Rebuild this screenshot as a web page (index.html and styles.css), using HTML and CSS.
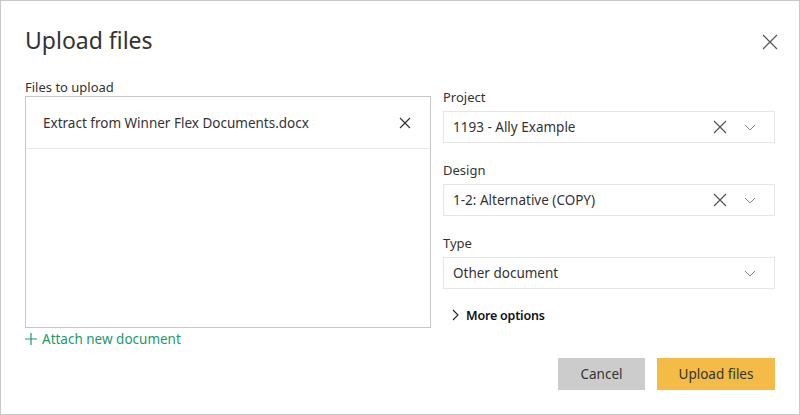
FILE: index.html
```html
<!DOCTYPE html>
<html lang="en">

<head>
  <meta charset="UTF-8">
  <title>Upload files</title>
  <link rel="stylesheet" href="styles.css">
</head>

<body>
  <div class="dialog">
    <header class="dialog-header">
      <h1>Upload files</h1>
      <button class="icon-btn close-btn" aria-label="Close">
        <svg width="16" height="16" viewBox="0 0 16 16"><path d="M1 1L15 15M15 1L1 15" stroke="#555" stroke-width="1.2" fill="none"/></svg>
      </button>
    </header>

    <div class="dialog-body">
      <div class="files-col">
        <div class="label">Files to upload</div>
        <div class="file-box">
          <div class="file-row">
            <span>Extract from Winner Flex Documents.docx</span>
            <svg width="12" height="12" viewBox="0 0 12 12"><path d="M1 1L11 11M11 1L1 11" stroke="#333" stroke-width="1.2" fill="none"/></svg>
          </div>
        </div>
        <a class="attach-link" href="#">
          <svg width="12" height="12" viewBox="0 0 12 12"><path d="M6 0V12M0 6H12" stroke="#1b9a6c" stroke-width="1.2" fill="none"/></svg>
          Attach new document
        </a>
      </div>

      <div class="fields-col">
        <div class="field">
          <div class="label">Project</div>
          <div class="select">
            <span class="value">1193 - Ally Example</span>
            <svg class="clear" width="14" height="14" viewBox="0 0 14 14"><path d="M1 1L13 13M13 1L1 13" stroke="#555" stroke-width="1.3" fill="none"/></svg>
            <svg class="chev" width="12" height="7" viewBox="0 0 12 7"><path d="M1 1L6 6L11 1" stroke="#888" stroke-width="1" fill="none"/></svg>
          </div>
        </div>
        <div class="field">
          <div class="label">Design</div>
          <div class="select">
            <span class="value">1-2: Alternative (COPY)</span>
            <svg class="clear" width="14" height="14" viewBox="0 0 14 14"><path d="M1 1L13 13M13 1L1 13" stroke="#555" stroke-width="1.3" fill="none"/></svg>
            <svg class="chev" width="12" height="7" viewBox="0 0 12 7"><path d="M1 1L6 6L11 1" stroke="#888" stroke-width="1" fill="none"/></svg>
          </div>
        </div>
        <div class="field">
          <div class="label">Type</div>
          <div class="select">
            <span class="value">Other document</span>
            <svg class="chev" width="12" height="7" viewBox="0 0 12 7"><path d="M1 1L6 6L11 1" stroke="#888" stroke-width="1" fill="none"/></svg>
          </div>
        </div>
        <div class="more-options">
          <svg width="7" height="12" viewBox="0 0 7 12"><path d="M1 1L6 6L1 11" stroke="#222" stroke-width="1.1" fill="none"/></svg>
          More options
        </div>
      </div>
    </div>

    <footer class="dialog-footer">
      <button class="btn btn-cancel">Cancel</button>
      <button class="btn btn-primary">Upload files</button>
    </footer>
  </div>
</body>

</html>
```

FILE: styles.css
```css
body {
  margin: 0;
  font-family: "Noto Sans", Arial, sans-serif;
  color: #333;
  background: #fff;
}

.dialog {
  width: 800px;
  height: 415px;
  box-sizing: border-box;
  border: 1px solid #c8c8c8;
  padding: 0 24px;
  display: flex;
  flex-direction: column;
}

.dialog-header {
  display: flex;
  align-items: center;
  justify-content: space-between;
  height: 78px;
}

.dialog-header h1 {
  margin: 0 0 0 0;
  font-size: 23px;
  font-weight: 400;
  color: #333;
}

.icon-btn {
  border: none;
  background: none;
  padding: 0;
  cursor: pointer;
  display: flex;
}

.close-btn {
  margin: 4px -3px 0 0;
}

.dialog-body {
  display: flex;
  gap: 12px;
}

.label {
  font-size: 13px;
  line-height: 17px;
  color: #333;
}

.files-col {
  width: 406px;
}

.file-box {
  height: 230px;
  border: 1px solid #c8c8c8;
}

.file-row {
  display: flex;
  align-items: center;
  justify-content: space-between;
  height: 51px;
  padding: 0 19px 0 17px;
  border-bottom: 1px solid #e8e8e8;
  font-size: 13.5px;
}

.attach-link {
  display: inline-flex;
  align-items: center;
  gap: 5px;
  margin-top: 1px;
  font-size: 13.5px;
  color: #1b9a6c;
  text-decoration: none;
}

.fields-col {
  flex: 1;
  padding-top: 10px;
}

.field {
  margin-bottom: 19px;
}

.field .label {
  margin-bottom: 5px;
}

.select {
  display: flex;
  align-items: center;
  height: 30px;
  border: 1px solid #e6e6e6;
  padding: 0 18px 0 9px;
  font-size: 13.5px;
}

.select .value {
  flex: 1;
}

.select .clear {
  margin-right: 17px;
}

.more-options {
  display: flex;
  align-items: center;
  gap: 7px;
  height: 18px;
  padding-left: 9px;
  margin-top: -2px;
  font-size: 12.5px;
  font-weight: 600;
  letter-spacing: -0.2px;
  color: #111;
}

.dialog-footer {
  display: flex;
  justify-content: flex-end;
  gap: 12px;
  margin-top: auto;
  margin-bottom: 24px;
}

.btn {
  height: 32px;
  border: none;
  font-family: inherit;
  font-size: 13.5px;
  color: #333;
  cursor: pointer;
}

.btn-cancel {
  width: 87px;
  background: #cccccc;
}

.btn-primary {
  width: 118px;
  background: #f4bc46;
}
```
